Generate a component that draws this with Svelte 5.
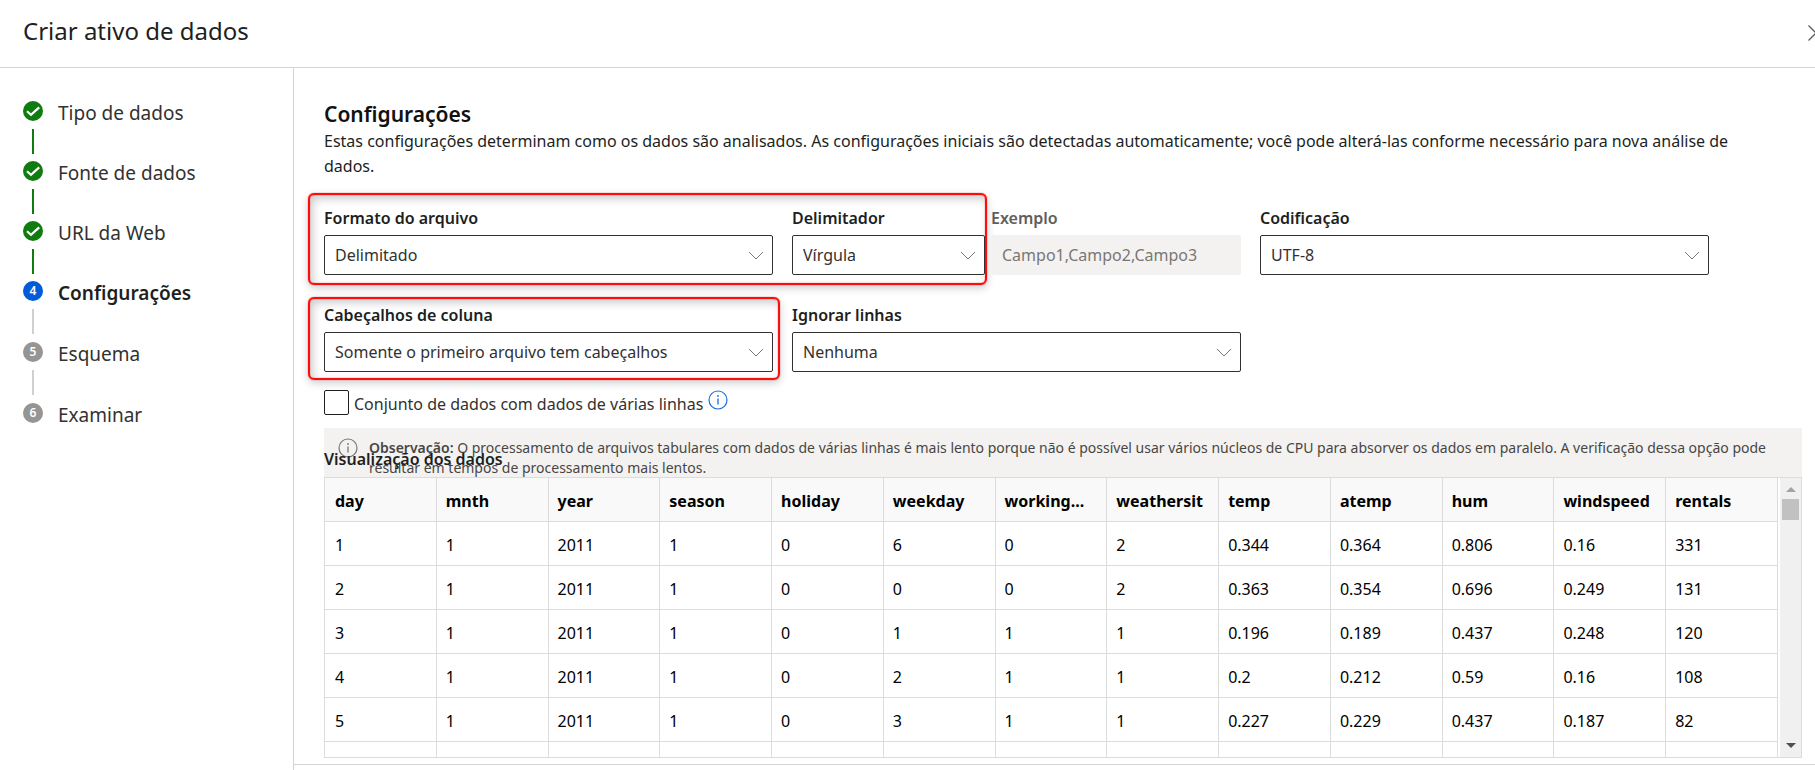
<script>
  const steps = [
    { n: 1, label: 'Tipo de dados', state: 'done' },
    { n: 2, label: 'Fonte de dados', state: 'done' },
    { n: 3, label: 'URL da Web', state: 'done' },
    { n: 4, label: 'Configurações', state: 'current' },
    { n: 5, label: 'Esquema', state: 'todo' },
    { n: 6, label: 'Examinar', state: 'todo' }
  ];

  const columns = ['day', 'mnth', 'year', 'season', 'holiday', 'weekday', 'working...', 'weathersit', 'temp', 'atemp', 'hum', 'windspeed', 'rentals'];

  const rows = [
    ['1', '1', '2011', '1', '0', '6', '0', '2', '0.344', '0.364', '0.806', '0.16', '331'],
    ['2', '1', '2011', '1', '0', '0', '0', '2', '0.363', '0.354', '0.696', '0.249', '131'],
    ['3', '1', '2011', '1', '0', '1', '1', '1', '0.196', '0.189', '0.437', '0.248', '120'],
    ['4', '1', '2011', '1', '0', '2', '1', '1', '0.2', '0.212', '0.59', '0.16', '108'],
    ['5', '1', '2011', '1', '0', '3', '1', '1', '0.227', '0.229', '0.437', '0.187', '82'],
    ['', '', '', '', '', '', '', '', '', '', '', '', '']
  ];
</script>

{#snippet dropdown(id, label, value)}
  <label for={id}>{label}</label>
  <div class="select">
    <select {id}><option>{value}</option></select>
    <svg viewBox="0 0 16 9" width="16" height="9" aria-hidden="true"><path d="M1 1l7 7 7-7" /></svg>
  </div>
{/snippet}

{#snippet info()}
  <svg class="info" viewBox="0 0 20 20" width="20" height="20" aria-hidden="true">
    <circle cx="10" cy="10" r="9" fill="none" stroke="currentColor" stroke-width="1.2" />
    <path d="M10 8.5v6" stroke="currentColor" stroke-width="1.3" />
    <circle cx="10" cy="6" r="0.9" fill="currentColor" />
  </svg>
{/snippet}

<div class="page">
  <header>
    <h1>Criar ativo de dados</h1>
    <button class="close" aria-label="Fechar">
      <svg viewBox="0 0 16 16" width="16" height="16" aria-hidden="true"><path d="M0.5 0.5l15 15M15.5 0.5l-15 15" /></svg>
    </button>
  </header>

  <div class="body">
    <nav>
      <ol>
        {#each steps as step}
          <li class={step.state}>
            <span class="dot">
              {#if step.state === 'done'}
                <svg viewBox="0 0 20 20" width="20" height="20" aria-hidden="true"><path d="M4 10.2l4 3.6 8.2-7.4" /></svg>
              {:else}
                {step.n}
              {/if}
            </span>
            <span class="name">{step.label}</span>
          </li>
        {/each}
      </ol>
    </nav>

    <main>
      <div class="content">
        <h2>Configurações</h2>
        <p class="intro">Estas configurações determinam como os dados são analisados. As configurações iniciais são detectadas automaticamente; você pode alterá-las conforme necessário para nova análise de dados.</p>

        <div class="fields">
          <div class="field">
            {@render dropdown('format', 'Formato do arquivo', 'Delimitado')}
            <div class="mark wide"></div>
          </div>
          <div class="pair">
            <div class="field delimiter">
              {@render dropdown('delimiter', 'Delimitador', 'Vírgula')}
            </div>
            <div class="field example">
              <label for="example">Exemplo</label>
              <input id="example" type="text" value="Campo1,Campo2,Campo3" disabled />
            </div>
          </div>
          <div class="field">
            {@render dropdown('encoding', 'Codificação', 'UTF-8')}
          </div>
          <div class="field">
            {@render dropdown('headers', 'Cabeçalhos de coluna', 'Somente o primeiro arquivo tem cabeçalhos')}
            <div class="mark narrow"></div>
          </div>
          <div class="field">
            {@render dropdown('skip', 'Ignorar linhas', 'Nenhuma')}
          </div>
        </div>

        <div class="check">
          <input id="multiline" type="checkbox" />
          <label for="multiline">Conjunto de dados com dados de várias linhas</label>
          {@render info()}
        </div>

        <div class="note">
          {@render info()}
          <p><strong>Observação:</strong> O processamento de arquivos tabulares com dados de várias linhas é mais lento porque não é possível usar vários núcleos de CPU para absorver os dados em paralelo. A verificação dessa opção pode resultar em tempos de processamento mais lentos.</p>
        </div>

        <section class="preview">
          <h3>Visualização dos dados</h3>
          <div class="grid">
            <div class="viewport">
              <table>
                <thead>
                  <tr>{#each columns as c}<th scope="col">{c}</th>{/each}</tr>
                </thead>
                <tbody>
                  {#each rows as row}
                    <tr>{#each row as cell}<td>{cell}</td>{/each}</tr>
                  {/each}
                </tbody>
              </table>
            </div>
            <div class="scrollbar" aria-hidden="true">
              <span class="arrow up"></span>
              <span class="thumb"></span>
              <span class="arrow down"></span>
            </div>
          </div>
        </section>
      </div>
      <footer></footer>
    </main>
  </div>
</div>

<style>
  :global(body) {
    margin: 0;
    overflow: hidden;
    background: #fff;
  }

  .page {
    display: flex;
    flex-direction: column;
    height: 100vh;
    overflow: hidden;
    font-family: 'Noto Sans', 'Open Sans', sans-serif;
    font-size: 16px;
    color: #323130;
  }

  .page *,
  .page *::before,
  .page *::after {
    box-sizing: border-box;
  }

  h1, h2, h3, p, ol {
    margin: 0;
    padding: 0;
  }

  header {
    display: flex;
    justify-content: space-between;
    align-items: center;
    flex: none;
    padding: 15px 0 20px 23px;
    border-bottom: 1px solid #d2d4d6;
  }

  h1 {
    font-size: 24px;
    line-height: 32px;
    font-weight: 400;
    color: #201f1e;
  }

  .close {
    display: flex;
    margin: 4px -9px 0 0;
    padding: 0;
    border: 0;
    background: none;
  }

  .close path {
    fill: none;
    stroke: #605e5c;
    stroke-width: 1.3;
  }

  .body {
    display: flex;
    flex: 1;
    min-height: 0;
  }

  nav {
    flex: none;
    width: 294px;
    padding: 33px 23px;
    border-right: 1px solid #d2d4d6;
  }

  ol {
    list-style: none;
  }

  li {
    display: flex;
    gap: 15px;
    position: relative;
    height: 61px;
  }

  li.done {
    height: 60px;
  }

  li:not(:last-child)::after {
    content: '';
    position: absolute;
    left: 9px;
    top: 28px;
    width: 2px;
    height: 25px;
    background: #d2d0ce;
  }

  li.done:not(:last-child)::after {
    background: #107c10;
  }

  .dot {
    display: flex;
    align-items: center;
    justify-content: center;
    flex: none;
    width: 20px;
    height: 20px;
    border-radius: 50%;
    background: #979593;
    color: #fff;
    font-size: 12px;
    line-height: 20px;
    font-weight: 600;
  }

  .done .dot {
    background: #107c10;
  }

  .current .dot {
    background: #015cda;
  }

  .dot path {
    fill: none;
    stroke: #fff;
    stroke-width: 2.2;
  }

  .name {
    font-size: 19px;
    line-height: 24px;
  }

  .current .name {
    font-weight: 600;
    color: #201f1e;
  }

  main {
    display: flex;
    flex-direction: column;
    flex: 1;
    min-width: 0;
  }

  .content {
    display: flex;
    flex-direction: column;
    flex: 1;
    min-height: 0;
    padding: 32px 13px 6px 30px;
  }

  h2 {
    margin-bottom: 1px;
    font-size: 21px;
    line-height: 28px;
    font-weight: 600;
    color: #111;
  }

  .intro {
    line-height: 25px;
    padding-right: 30px;
    color: #201f1e;
  }

  .fields {
    display: grid;
    grid-template-columns: repeat(3, 1fr);
    gap: 29px 19px;
    margin: 28px 93px 18px 0;
  }

  .field {
    display: flex;
    flex-direction: column;
    gap: 6px;
    position: relative;
    min-width: 0;
  }

  .field label {
    line-height: 22px;
    font-weight: 600;
    color: #201f1e;
  }

  .pair {
    display: flex;
    gap: 6px;
  }

  .delimiter {
    flex: none;
    width: 193px;
  }

  .example {
    flex: 1;
  }

  .example label {
    color: #605e5c;
  }

  .select {
    display: flex;
    align-items: center;
    position: relative;
  }

  .select select,
  .example input {
    appearance: none;
    width: 100%;
    height: 40px;
    margin: 0;
    padding: 0 34px 0 10px;
    border: 1px solid #323130;
    border-radius: 2px;
    background: #fff;
    font: inherit;
    color: #323130;
    opacity: 1;
  }

  .example input {
    border-color: #f3f2f1;
    background: #f3f2f1;
    color: #797775;
    padding-right: 8px;
  }

  .select svg {
    position: absolute;
    right: 9px;
    pointer-events: none;
  }

  .select path {
    fill: none;
    stroke: #797775;
    stroke-width: 1;
  }

  .mark {
    position: absolute;
    border: 2px solid #fb0d0d;
    border-radius: 6px;
    box-shadow: 0 0 1px #f00, 0 3px 9px rgba(0, 0, 0, 0.2), inset 0 0 1px #f00, inset 3px 4px 9px rgba(0, 0, 0, 0.2);
    pointer-events: none;
  }

  .wide {
    inset: -14px -214px -10px -16px;
  }

  .narrow {
    inset: -7px -7px -8px -16px;
  }

  .check {
    display: flex;
    align-items: flex-start;
  }

  .check input {
    appearance: none;
    width: 25px;
    height: 25px;
    margin: 0 5px 0 0;
    border: 1px solid #201f1e;
    border-radius: 2px;
    background: #fff;
  }

  .check label {
    line-height: 28px;
    height: 25px;
    margin-right: 5px;
  }

  .check .info {
    color: #1a6fe0;
  }

  .info {
    flex: none;
  }

  .note {
    display: flex;
    gap: 11px;
    margin-top: 13px;
    padding: 10px 16px 10px 14px;
    background: #f3f2f1;
    color: #484644;
    font-size: 14px;
    line-height: 20px;
  }

  .note strong {
    font-weight: 600;
  }

  .note .info {
    color: #797775;
  }

  .preview {
    display: flex;
    flex-direction: column;
    flex: 1;
    min-height: 0;
    position: relative;
    margin-top: -41px;
  }

  h3 {
    margin-bottom: 6px;
    font-size: 16px;
    line-height: 24px;
    font-weight: 600;
    color: #201f1e;
  }

  .grid {
    display: flex;
    gap: 2px;
    flex: 1;
    min-height: 0;
    border: 1px solid #dcdcdc;
    background: #fff;
  }

  .viewport {
    flex: 1;
    min-width: 0;
    overflow: hidden;
  }

  table {
    width: 100%;
    table-layout: fixed;
    border-collapse: separate;
    border-spacing: 0;
    color: #000;
  }

  th, td {
    height: 44px;
    padding: 2px 8px 0 9px;
    border-right: 1px solid #dcdcdc;
    border-bottom: 1px solid #dcdcdc;
    line-height: 22px;
    text-align: left;
    white-space: nowrap;
  }

  th:first-child,
  td:first-child {
    padding-left: 10px;
  }

  th {
    background: #f9f9f9;
    font-weight: 700;
  }

  .scrollbar {
    display: flex;
    flex-direction: column;
    align-items: center;
    flex: none;
    width: 21px;
    padding: 9px 0;
    background: #f0f0f0;
  }

  .arrow {
    border: 5px solid transparent;
  }

  .up {
    border-top: 0;
    border-bottom-color: #a3a3a3;
  }

  .down {
    margin-top: auto;
    border-bottom: 0;
    border-top-color: #505050;
  }

  .thumb {
    width: 17px;
    height: 21px;
    margin-top: 7px;
    background: #c1c1c1;
  }

  footer {
    flex: none;
    height: 6px;
    border-top: 1px solid #d2d4d6;
  }
</style>
